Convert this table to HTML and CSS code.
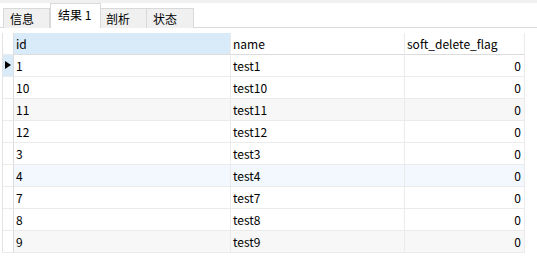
FILE: index.html
```html
<!DOCTYPE html>
<html lang="zh-CN">
<head>
    <meta charset="UTF-8">
    <title>结果 1</title>
    <link rel="stylesheet" href="styles.css">
</head>
<body>

<div class="top-strip"></div>

<!-- 标签页 -->
<div class="tabs">
    <div class="tab">信息</div>
    <div class="tab active">结果 1</div>
    <div class="tab">剖析</div>
    <div class="tab">状态</div>
</div>

<!-- 结果表格 -->
<div class="grid">
    <div class="cell row-head"></div>
    <div class="cell head selected">id</div>
    <div class="cell head">name</div>
    <div class="cell head">soft_delete_flag</div>

    <div class="cell row-head current"><span class="arrow"></span></div>
    <div class="cell">1</div>
    <div class="cell">test1</div>
    <div class="cell num">0</div>

    <div class="cell row-head"></div>
    <div class="cell">10</div>
    <div class="cell">test10</div>
    <div class="cell num">0</div>

    <div class="cell row-head"></div>
    <div class="cell alt">11</div>
    <div class="cell alt">test11</div>
    <div class="cell alt num">0</div>

    <div class="cell row-head"></div>
    <div class="cell">12</div>
    <div class="cell">test12</div>
    <div class="cell num">0</div>

    <div class="cell row-head"></div>
    <div class="cell">3</div>
    <div class="cell">test3</div>
    <div class="cell num">0</div>

    <div class="cell row-head"></div>
    <div class="cell hover">4</div>
    <div class="cell hover">test4</div>
    <div class="cell hover num">0</div>

    <div class="cell row-head"></div>
    <div class="cell">7</div>
    <div class="cell">test7</div>
    <div class="cell num">0</div>

    <div class="cell row-head"></div>
    <div class="cell">8</div>
    <div class="cell">test8</div>
    <div class="cell num">0</div>

    <div class="cell row-head"></div>
    <div class="cell alt">9</div>
    <div class="cell alt">test9</div>
    <div class="cell alt num">0</div>
</div>

</body>
</html>
```

FILE: styles.css
```css
body {
    margin: 0;
    background: #ffffff;
    font-family: "Noto Sans CJK SC", "Noto Sans", sans-serif;
    font-size: 12px;
    color: #000;
}

.top-strip {
    height: 3px;
    background: #f0f0f0;
}

/* 标签页 */
.tabs {
    display: flex;
    align-items: flex-end;
    height: 24px;
    padding-left: 3px;
    border-bottom: 1px solid #dadada;
}

.tab {
    box-sizing: border-box;
    height: 20px;
    width: 47px;
    margin-bottom: -1px;
    padding-left: 6px;
    line-height: 19px;
    background: #f0f0f0;
    border: 1px solid #d9d9d9;
    border-bottom: none;
}

.tab + .tab {
    border-left: none;
}

.tab.active {
    height: 25px;
    width: 51px;
    padding-left: 7px;
    line-height: 22px;
    background: #ffffff;
    border-left: 1px solid #d9d9d9;
}

.tab.active + .tab {
    border-left: none;
    width: 46px;
    padding-left: 5px;
}

/* 表格 */
.grid {
    display: grid;
    grid-template-columns: 12px 217px 174px 120px;
    margin: 5px 0 0 2px;
}

.cell {
    box-sizing: border-box;
    height: 22px;
    padding-left: 2px;
    line-height: 21px;
    white-space: nowrap;
    overflow: hidden;
    border-right: 1px solid #ebebeb;
    border-bottom: 1px solid #ebebeb;
}

.head {
    border-bottom-color: #dcdcdc;
}

.selected {
    background: #d9eaf8;
}

.alt {
    background: #f7f7f7;
}

.hover {
    background: #f2f8fd;
}

.num {
    text-align: right;
    padding-right: 3px;
}

.row-head {
    padding: 0;
    border-left: 1px solid #e3e3e3;
    border-right-color: #dcdcdc;
    position: relative;
}

.row-head.current {
    background: #d9eaf8;
}

.arrow {
    position: absolute;
    left: 2px;
    top: 6px;
    border-top: 4.5px solid transparent;
    border-bottom: 4.5px solid transparent;
    border-left: 6px solid #000;
}
```
